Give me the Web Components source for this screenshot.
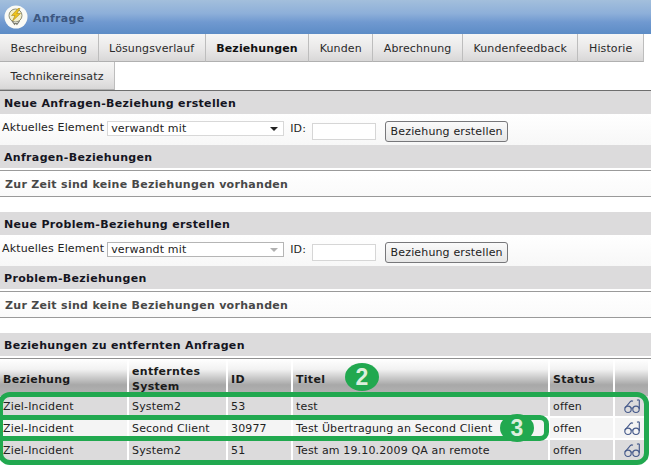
<!DOCTYPE html>
<html>
<head>
<meta charset="utf-8">
<style>
  html, body { margin: 0; padding: 0; background: #fff; }
  body { width: 651px; height: 470px; overflow: hidden; font: 11px "DejaVu Sans", Verdana, sans-serif; color: #222; letter-spacing: .15px; }
</style>
</head>
<body>
<ticket-page></ticket-page>
<script>
class TicketHeader extends HTMLElement {
  constructor() {
    super();
    this.attachShadow({ mode: "open" });
    this.shadowRoot.innerHTML = `
      <style>
      :host {
        display: flex;
        align-items: center;
        gap: 5px;
        height: 34px;
        padding-left: 4px;
        box-sizing: border-box;
        background: linear-gradient(#a3bfdc 0, #8dafd9 40%, #7099d0 65%, #5c8cc6 100%);
      }
      svg { display: block; }
      span { font-weight: bold; letter-spacing: .3px; color: #3b5680; padding-top: 2px; }
      </style>
      <svg width="24" height="24" viewBox="0 0 24 24">
        <circle cx="12" cy="12" r="11.5" fill="#fbfbf6"/>
        <circle cx="11.5" cy="10.5" r="6.5" fill="#f3eecb" stroke="#8f8f78" stroke-width="1"/>
        <path d="M14 3.5 L7.5 10.5 H11 L8.5 16 L16.5 8.5 H12.8 L16 3.5 Z" fill="#eec21c" stroke="#a4861c" stroke-width=".6"/>
        <path d="M8 16 L11 20 M15.5 16 L12.5 20 M9.5 18.5 H14" fill="none" stroke="#7d7d70" stroke-width="1.2"/>
      </svg>
      <span><slot></slot></span>
    `;
  }
}

class TicketTab extends HTMLElement {
  constructor() {
    super();
    this.attachShadow({ mode: "open" });
    this.shadowRoot.innerHTML = `
      <style>
      :host {
        display: block;
        height: 28px;
        line-height: 29px;
        padding: 0 10.4px 0 10.6px;
        box-sizing: border-box;
        background: linear-gradient(#f6f6f5 0, #e9e8e8 55%, #d8d7d7 100%);
        border-right: 1px solid #bdbdbd;
        border-bottom: 1px solid #b0b0b0;
        color: #2a2a2a;
        letter-spacing: .12px;
        white-space: nowrap;
      }
      :host([active]) { font-weight: bold; color: #111; }
      </style>
      <slot></slot>
    `;
  }
}

class TicketTabs extends HTMLElement {
  constructor() {
    super();
    this.attachShadow({ mode: "open" });
    this.shadowRoot.innerHTML = `
      <style>
      :host {
        display: flex;
        flex-wrap: wrap;
        border-bottom: 1px solid #6e6e6e;
      }
      </style>
      <slot></slot>
    `;
  }
}

class SectionHead extends HTMLElement {
  constructor() {
    super();
    this.attachShadow({ mode: "open" });
    this.shadowRoot.innerHTML = `
      <style>
      :host {
        display: block;
        height: 23px;
        line-height: 25px;
        padding-left: 4px;
        background: #dcdbdc;
        font-weight: bold;
        letter-spacing: .33px;
        color: #15151f;
      }
      </style>
      <slot></slot>
    `;
  }
}

class RelationForm extends HTMLElement {
  constructor() {
    super();
    this.attachShadow({ mode: "open" });
    const disabled = this.hasAttribute("muted");
    this.shadowRoot.innerHTML = `
      <style>
      :host {
        display: flex;
        align-items: flex-start;
        height: 31px;
        padding: 7px 0 0 2px;
        box-sizing: border-box;
        background: linear-gradient(#fff, #f7f7f7);
      }
      .txt { line-height: 14px; }
      .sel {
        width: 177px;
        height: 15px;
        margin-left: 3px;
        display: flex;
        align-items: center;
        justify-content: space-between;
        padding: 0 3px;
        box-sizing: border-box;
        background: #fff;
        border: 1px solid ${disabled ? "#b5b5b5" : "#d8d8d8"};
      }
      .sel span { white-space: nowrap; }
      .sel i {
        width: 0; height: 0; margin-right: 2px;
        border: 4px solid transparent;
        border-top-color: ${disabled ? "#b0b0b0" : "#222"};
        border-bottom: 0;
      }
      label { margin-left: 6px; width: 22px; line-height: 15px; }
      .id {
        width: 64px;
        height: 17px;
        margin-top: 2px;
        background: #fff;
        border: 1px solid #d6d6d6;
        box-sizing: border-box;
      }
      .btn {
        margin-left: 9px;
        height: 21px;
        line-height: 20px;
        width: 123px;
        text-align: center;
        box-sizing: border-box;
        border: 1px solid #77777a;
        border-radius: 3px;
        background: linear-gradient(#fafafa, #e6e6e6);
      }
      </style>
      <span class="txt">Aktuelles Element</span>
      <div class="sel"><span>verwandt mit</span><i></i></div>
      <label>ID:</label>
      <div class="id"></div>
      <div class="btn">Beziehung erstellen</div>
    `;
  }
}

class EmptyNote extends HTMLElement {
  constructor() {
    super();
    this.attachShadow({ mode: "open" });
    this.shadowRoot.innerHTML = `
      <style>
      :host {
        display: block;
        height: 27px;
        line-height: 27px;
        padding-left: 5px;
        box-sizing: border-box;
        margin-top: 2px;
        border-top: 1px solid #9a9a9a;
        border-bottom: 1px solid #9a9a9a;
        background: linear-gradient(#fff, #fafafa);
        font-weight: bold;
        letter-spacing: .3px;
        color: #484848;
      }
      </style>
      <slot></slot>
    `;
  }
}

class RemoteTable extends HTMLElement {
  constructor() {
    super();
    this.attachShadow({ mode: "open" });
    const rows = [
      ["Ziel-Incident", "System2", "53", "test", "offen"],
      ["Ziel-Incident", "Second Client", "30977", "Test Übertragung an Second Client", "offen"],
      ["Ziel-Incident", "System2", "51", "Test am 19.10.2009 QA an remote", "offen"]
    ];
    const glasses = `<svg width="17" height="15" viewBox="0 0 17 15" fill="none" stroke="#45598a" stroke-width="1.15">
        <circle cx="4" cy="10.3" r="3.2"/><circle cx="12" cy="10.3" r="3.2"/>
        <path d="M7 9.4 Q8 8.6 9 9.4 M1 9 L6.5 2.5 Q7.5 1.5 9 2.2 M15.3 10 V1.2 Q14.2 .6 13 1.2"/>
      </svg>`;
    this.shadowRoot.innerHTML = `
      <style>
      :host { display: block; margin-top: 2px; border-top: 1px solid #8f8f8f; }
      .grid {
        display: grid;
        grid-template-columns: 127px 97px 63px 255px 63px 1fr;
        column-gap: 2px;
        row-gap: 2px;
        padding-right: 3px;
      }
      .th {
        height: 37px;
        display: flex;
        align-items: flex-end;
        padding: 0 0 9px 3px;
        box-sizing: border-box;
        line-height: 15px;
        font-weight: bold;
        letter-spacing: .3px;
        color: #1b1b1b;
        background: linear-gradient(#fff 0, #f2f2f2 28%, #a8a8a8 70%, #b5b5b5 100%);
      }
      .th.two { padding-bottom: 2px; }
      .td {
        height: 20px;
        line-height: 22px;
        padding-left: 3px;
        box-sizing: border-box;
        white-space: nowrap;
        background: #dcdbdc;
      }
      .td.even { background: #f4f4f4; }
      .td.icon { display: flex; align-items: center; padding: 0 0 0 9px; }
      </style>
      <div class="grid">
        <div class="th">Beziehung</div><div class="th two">entferntes System</div><div class="th">ID</div><div class="th">Titel</div><div class="th">Status</div><div class="th"></div>
      </div>
      <div class="grid">
        ${rows.map((r, i) => r.map(c => `<div class="td ${i % 2 ? "even" : ""}">${c}</div>`).join("") + `<div class="td icon ${i % 2 ? "even" : ""}">${glasses}</div>`).join("")}
      </div>
    `;
  }
}

class CalloutBadge extends HTMLElement {
  constructor() {
    super();
    this.attachShadow({ mode: "open" });
    this.shadowRoot.innerHTML = `
      <style>
      :host {
        position: absolute;
        width: 34px;
        height: 28px;
        border-radius: 50%;
        background: #21a84f;
        color: #dcefdd;
        font: bold 23px/28px "Liberation Sans", Arial, sans-serif;
        letter-spacing: 0;
        text-align: center;
      }
      </style>
      <slot></slot>
    `;
  }
}

class TicketPage extends HTMLElement {
  constructor() {
    super();
    this.attachShadow({ mode: "open" });
    this.shadowRoot.innerHTML = `
      <style>
      :host { display: block; position: relative; width: 651px; height: 470px; overflow: hidden; }
      .gap { height: 15px; }
      .hl { position: absolute; box-sizing: border-box; border: 5px solid #21a84f; pointer-events: none; }
      .outer { left: -2px; top: 392px; width: 651px; height: 73px; border-radius: 12px; }
      .inner { left: -6px; top: 415px; width: 555px; height: 26px; border-radius: 9px; }
      </style>
      <ticket-header>Anfrage</ticket-header>
      <ticket-tabs>
        <ticket-tab>Beschreibung</ticket-tab>
        <ticket-tab>Lösungsverlauf</ticket-tab>
        <ticket-tab active>Beziehungen</ticket-tab>
        <ticket-tab>Kunden</ticket-tab>
        <ticket-tab>Abrechnung</ticket-tab>
        <ticket-tab>Kundenfeedback</ticket-tab>
        <ticket-tab>Historie</ticket-tab>
        <ticket-tab>Technikereinsatz</ticket-tab>
      </ticket-tabs>
      <section-head>Neue Anfragen-Beziehung erstellen</section-head>
      <relation-form></relation-form>
      <section-head>Anfragen-Beziehungen</section-head>
      <empty-note>Zur Zeit sind keine Beziehungen vorhanden</empty-note>
      <div class="gap"></div>
      <section-head>Neue Problem-Beziehung erstellen</section-head>
      <relation-form muted></relation-form>
      <section-head>Problem-Beziehungen</section-head>
      <empty-note>Zur Zeit sind keine Beziehungen vorhanden</empty-note>
      <div class="gap"></div>
      <section-head>Beziehungen zu entfernten Anfragen</section-head>
      <remote-table></remote-table>
      <div class="hl outer"></div>
      <div class="hl inner"></div>
      <callout-badge style="left:345px;top:363px">2</callout-badge>
      <callout-badge style="left:500px;top:414px">3</callout-badge>
    `;
  }
}

customElements.define("ticket-header", TicketHeader);
customElements.define("ticket-tab", TicketTab);
customElements.define("ticket-tabs", TicketTabs);
customElements.define("section-head", SectionHead);
customElements.define("relation-form", RelationForm);
customElements.define("empty-note", EmptyNote);
customElements.define("remote-table", RemoteTable);
customElements.define("callout-badge", CalloutBadge);
customElements.define("ticket-page", TicketPage);
</script>
</body>
</html>
